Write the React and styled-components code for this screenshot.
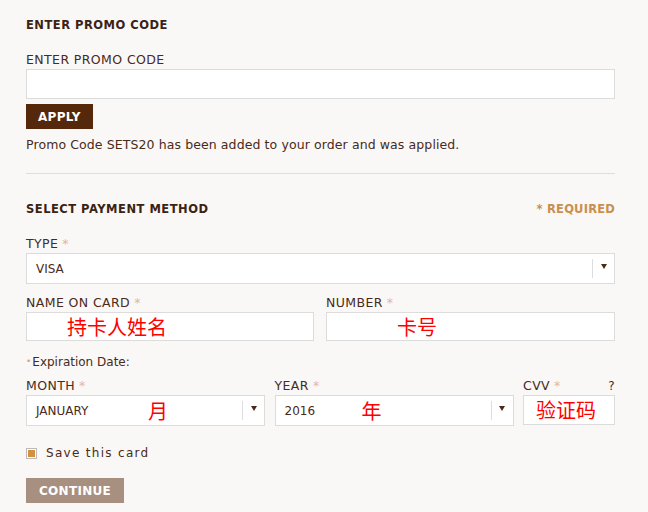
import React from "react";
import styled, { createGlobalStyle } from "styled-components";

const Global = createGlobalStyle`
  html, body { margin: 0; padding: 0; background: #f9f8f6; }
  body { font-family: "DejaVu Sans", "Noto Sans CJK SC", sans-serif; color: #4a2a1a; }
  * { box-sizing: border-box; }
`;

const Page = styled.div`
  width: 648px;
  height: 512px;
  padding: 18px 33px 0 26px;
  overflow: hidden;
`;

const Section = styled.section`
  display: flex;
  flex-direction: column;
`;

const Heading = styled.h2`
  margin: 0;
  font-size: 11.5px;
  font-weight: bold;
  letter-spacing: 0.5px;
  color: #3b2314;
  line-height: 14px;
`;

const HeadRow = styled.div`
  display: flex;
  justify-content: space-between;
  align-items: center;
`;

const Required = styled.span`
  font-size: 11.5px;
  font-weight: bold;
  color: #c98f4f;
  letter-spacing: 0.2px;
`;

const Label = styled.label`
  display: flex;
  justify-content: space-between;
  font-size: 12.5px;
  letter-spacing: 0.4px;
  color: #4a2a1a;
  line-height: 14px;
  margin-bottom: 2px;
  margin-top: ${(p) => p.$top || 0}px;
`;

const Star = styled.span`
  color: #e2b4a6;
  margin-left: 4px;
`;

const Input = styled.div`
  height: ${(p) => p.$h || 30}px;
  background: #fff;
  border: 1px solid #dcdcdc;
  display: flex;
  align-items: center;
  position: relative;
  font-size: 12px;
  color: #4a2a1a;
  padding-left: 9px;
`;

const Red = styled.span`
  position: absolute;
  left: ${(p) => p.$left}px;
  top: 50%;
  transform: translateY(-50%);
  color: #ff0000;
  font-family: "Noto Sans CJK SC", sans-serif;
  font-size: 20px;
  line-height: 1;
`;

const Caret = styled.div`
  position: absolute;
  right: 0;
  top: 5px;
  bottom: 5px;
  width: 22px;
  border-left: 1px solid #ddd;
  display: flex;
  align-items: flex-start;
  justify-content: center;
  padding-top: 5px;
  &::after {
    content: "";
    border-left: 3.5px solid transparent;
    border-right: 3.5px solid transparent;
    border-top: 5px solid #4a2a1a;
  }
`;

const Button = styled.button`
  align-self: flex-start;
  border: 0;
  background: ${(p) => p.$bg};
  color: #fff;
  font-family: "DejaVu Sans", sans-serif;
  font-weight: bold;
  font-size: 12px;
  letter-spacing: 0.3px;
  height: 25px;
  padding: 0 ${(p) => p.$px}px;
  margin-top: ${(p) => p.$top}px;
`;

const Message = styled.p`
  margin: 8px 0 0;
  font-size: 12.5px;
  letter-spacing: 0.1px;
  color: #4a2a1a;
`;

const Divider = styled.hr`
  border: 0;
  border-top: 1px solid #e0dcd8;
  margin: 21px 0 28px;
  width: 589px;
`;

const Row = styled.div`
  display: grid;
  grid-template-columns: ${(p) => p.$cols};
  justify-content: space-between;
`;

const Field = styled.div`
  display: flex;
  flex-direction: column;
`;

const Exp = styled.div`
  font-size: 12px;
  margin-top: 13px;
  line-height: 14px;
  &::before {
    content: "•";
    color: #e2a070;
    font-size: 9px;
    margin-right: 1px;
    vertical-align: 2px;
  }
`;

const Check = styled.label`
  display: flex;
  align-items: center;
  gap: 9px;
  margin-top: 20px;
  font-size: 12px;
  letter-spacing: 1.3px;
  color: #4a2a1a;
`;

const Box = styled.span`
  width: 11px;
  height: 11px;
  border: 1px solid #bbb;
  background: #fff;
  display: flex;
  align-items: center;
  justify-content: center;
  &::after {
    content: "";
    width: 7px;
    height: 7px;
    background: #d49040;
  }
`;

const Help = styled.span`
  font-size: 12px;
`;

export default function App() {
  return (
    <>
      <Global />
      <Page>
        <Section>
          <Heading>ENTER PROMO CODE</Heading>
          <Label $top={21}>ENTER PROMO CODE</Label>
          <Input />
          <Button $bg="#55280c" $px={12} $top={5}>APPLY</Button>
          <Message>Promo Code SETS20 has been added to your order and was applied.</Message>
          <Divider />
        </Section>
        <Section>
          <HeadRow>
            <Heading>SELECT PAYMENT METHOD</Heading>
            <Required>* REQUIRED</Required>
          </HeadRow>
          <Label $top={21}>
            <span>TYPE<Star>*</Star></span>
          </Label>
          <Input $h={31}>
            VISA
            <Caret />
          </Input>
          <Row $cols="288px 289px">
            <Field>
              <Label $top={12}><span>NAME ON CARD<Star>*</Star></span></Label>
              <Input $h={29}><Red $left={40}>持卡人姓名</Red></Input>
            </Field>
            <Field>
              <Label $top={12}><span>NUMBER<Star>*</Star></span></Label>
              <Input $h={29}><Red $left={70}>卡号</Red></Input>
            </Field>
          </Row>
          <Exp>Expiration Date:</Exp>
          <Row $cols="239px 239px 92px">
            <Field>
              <Label $top={10}><span>MONTH<Star>*</Star></span></Label>
              <Input $h={31}>
                JANUARY
                <Red $left={121}>月</Red>
                <Caret />
              </Input>
            </Field>
            <Field>
              <Label $top={10}><span>YEAR<Star>*</Star></span></Label>
              <Input $h={31}>
                2016
                <Red $left={86}>年</Red>
                <Caret />
              </Input>
            </Field>
            <Field>
              <Label $top={10}><span>CVV<Star>*</Star></span><Help>?</Help></Label>
              <Input $h={30}><Red $left={12}>验证码</Red></Input>
            </Field>
          </Row>
          <Check><Box />Save this card</Check>
          <Button $bg="#a89080" $px={13} $top={18}>CONTINUE</Button>
        </Section>
      </Page>
    </>
  );
}
